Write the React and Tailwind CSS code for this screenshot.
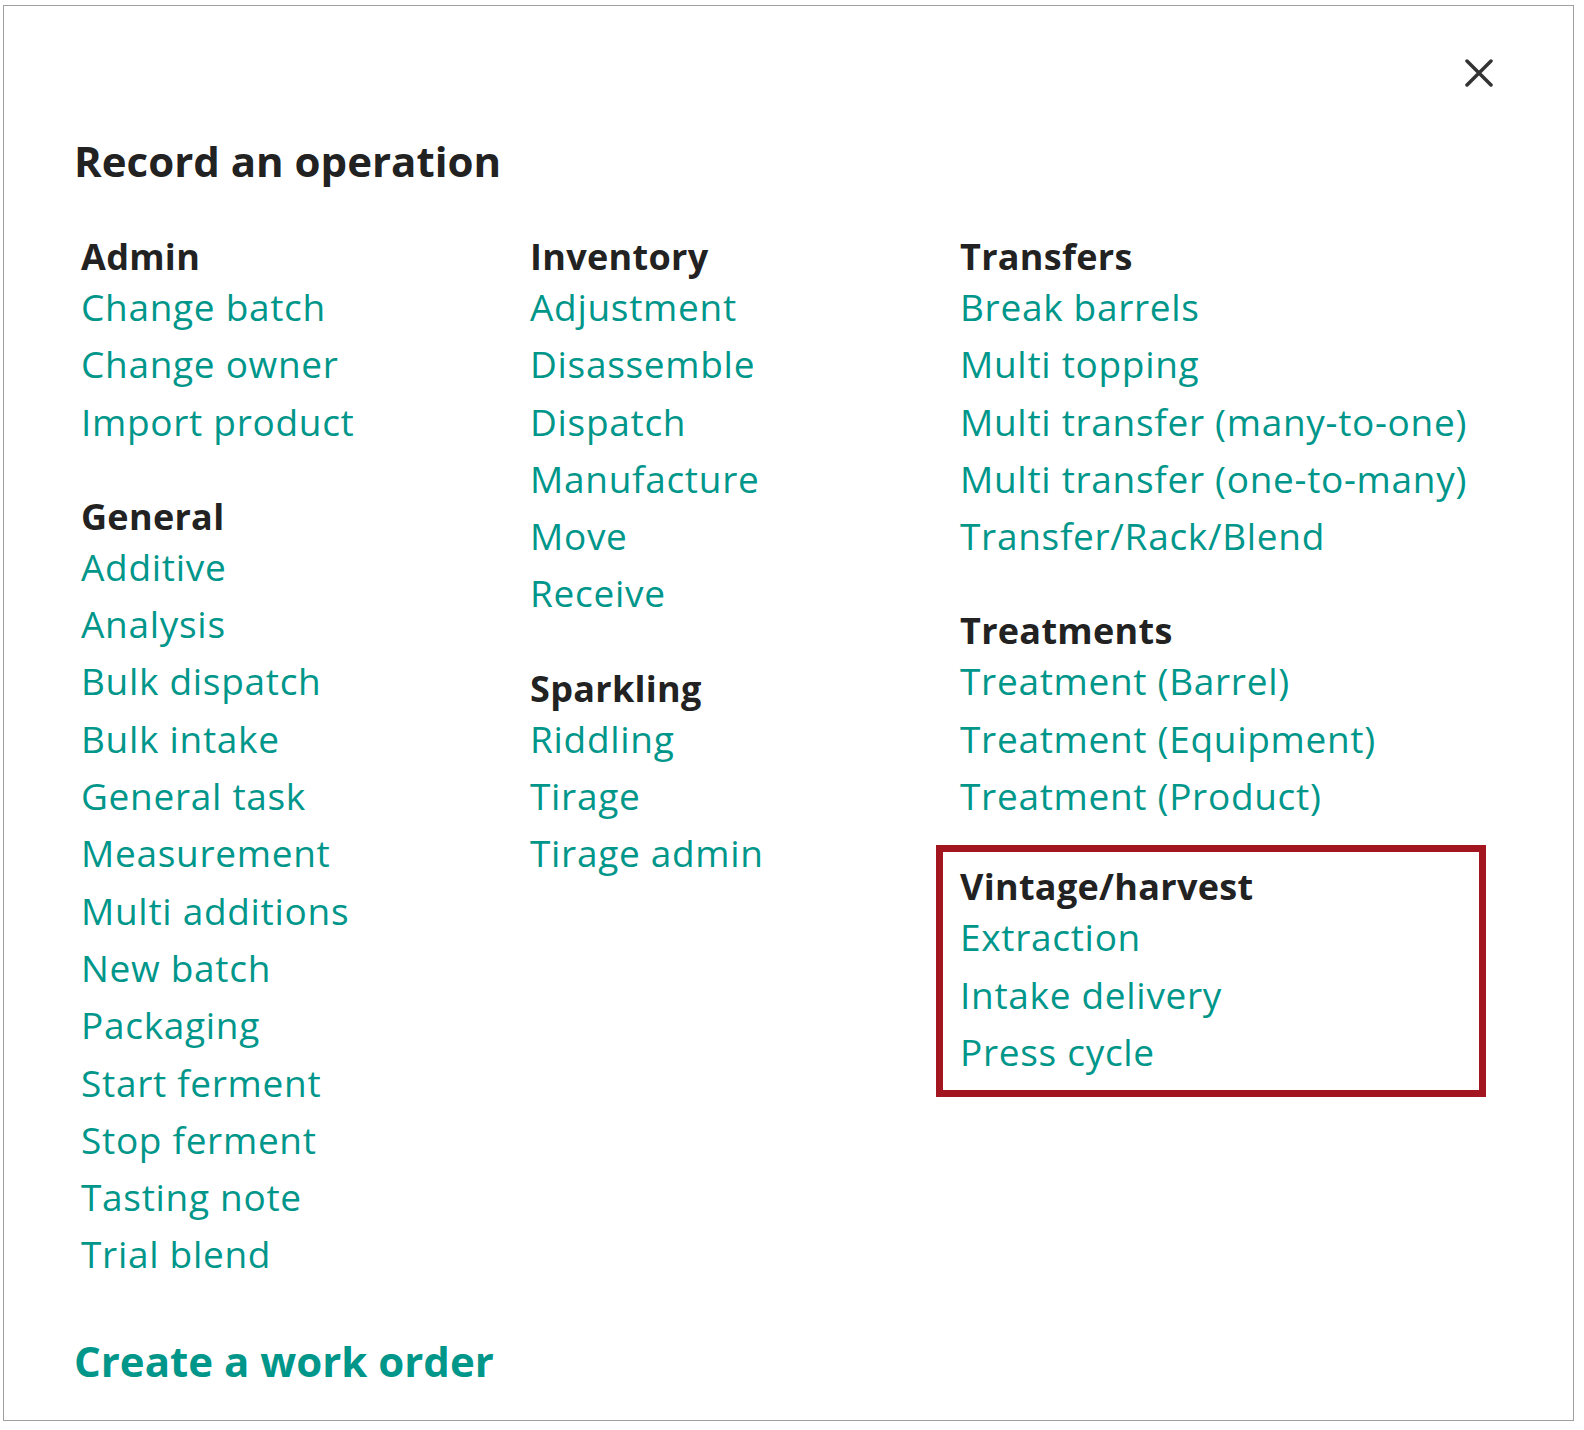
const sections = [
  [
    { title: "Admin", items: ["Change batch", "Change owner", "Import product"] },
    {
      title: "General",
      items: [
        "Additive",
        "Analysis",
        "Bulk dispatch",
        "Bulk intake",
        "General task",
        "Measurement",
        "Multi additions",
        "New batch",
        "Packaging",
        "Start ferment",
        "Stop ferment",
        "Tasting note",
        "Trial blend",
      ],
    },
  ],
  [
    { title: "Inventory", items: ["Adjustment", "Disassemble", "Dispatch", "Manufacture", "Move", "Receive"] },
    { title: "Sparkling", items: ["Riddling", "Tirage", "Tirage admin"] },
  ],
  [
    {
      title: "Transfers",
      items: [
        "Break barrels",
        "Multi topping",
        "Multi transfer (many-to-one)",
        "Multi transfer (one-to-many)",
        "Transfer/Rack/Blend",
      ],
    },
    { title: "Treatments", items: ["Treatment (Barrel)", "Treatment (Equipment)", "Treatment (Product)"] },
    { title: "Vintage/harvest", items: ["Extraction", "Intake delivery", "Press cycle"], highlight: true },
  ],
];

function Section({ title, items }) {
  return (
    <div>
      <h3 className="text-[36px] leading-[42px] tracking-[0.3px] font-bold text-[#222]">{title}</h3>
      <ul>
        {items.map((item) => (
          <li key={item}>
            <a href="#" className="block text-[37px] leading-[57.3px] tracking-[0.7px] text-[#00968a] whitespace-nowrap">
              {item}
            </a>
          </li>
        ))}
      </ul>
    </div>
  );
}

export default function App() {
  return (
    <div className="bg-white w-[1584px] h-[1430px] pt-[5px] pl-[3px] font-['Open_Sans',sans-serif]">
      <div className="w-[1571px] h-[1416px] border border-[#a0a0a0] flex flex-col pl-[70px] pr-[80px] pt-[53px]">
        <div className="flex justify-end">
          <button type="button" aria-label="Close" className="w-[28px] h-[28px] text-[#333]">
            <svg viewBox="0 0 28 28" className="w-[28px] h-[28px]" fill="none" stroke="currentColor" strokeWidth="3.5" strokeLinecap="round">
              <path d="M2 2L26 26M26 2L2 26" />
            </svg>
          </button>
        </div>
        <h2 className="mt-[52px] text-[42px] leading-[44px] font-bold text-[#222]">Record an operation</h2>
        <div className="mt-[53px] ml-[7px] grid grid-cols-[449px_430px_1fr]">
          {sections.map((col, i) => (
            <div key={i} className="flex flex-col">
              {col.map((s, j) =>
                s.highlight ? (
                  <div key={s.title} className="mt-[21px] -ml-[24px] w-[550px] border-[7px] border-[#a3161f] pl-[17px] pt-[14px] pb-[10px]">
                    <Section {...s} />
                  </div>
                ) : (
                  <div key={s.title} className={j > 0 ? "mt-[46px]" : ""}>
                    <Section {...s} />
                  </div>
                )
              )}
            </div>
          ))}
        </div>
        <a href="#" className="mt-[56px] text-[42px] leading-[44px] font-bold text-[#00968a] self-start">
          Create a work order
        </a>
      </div>
    </div>
  );
}
